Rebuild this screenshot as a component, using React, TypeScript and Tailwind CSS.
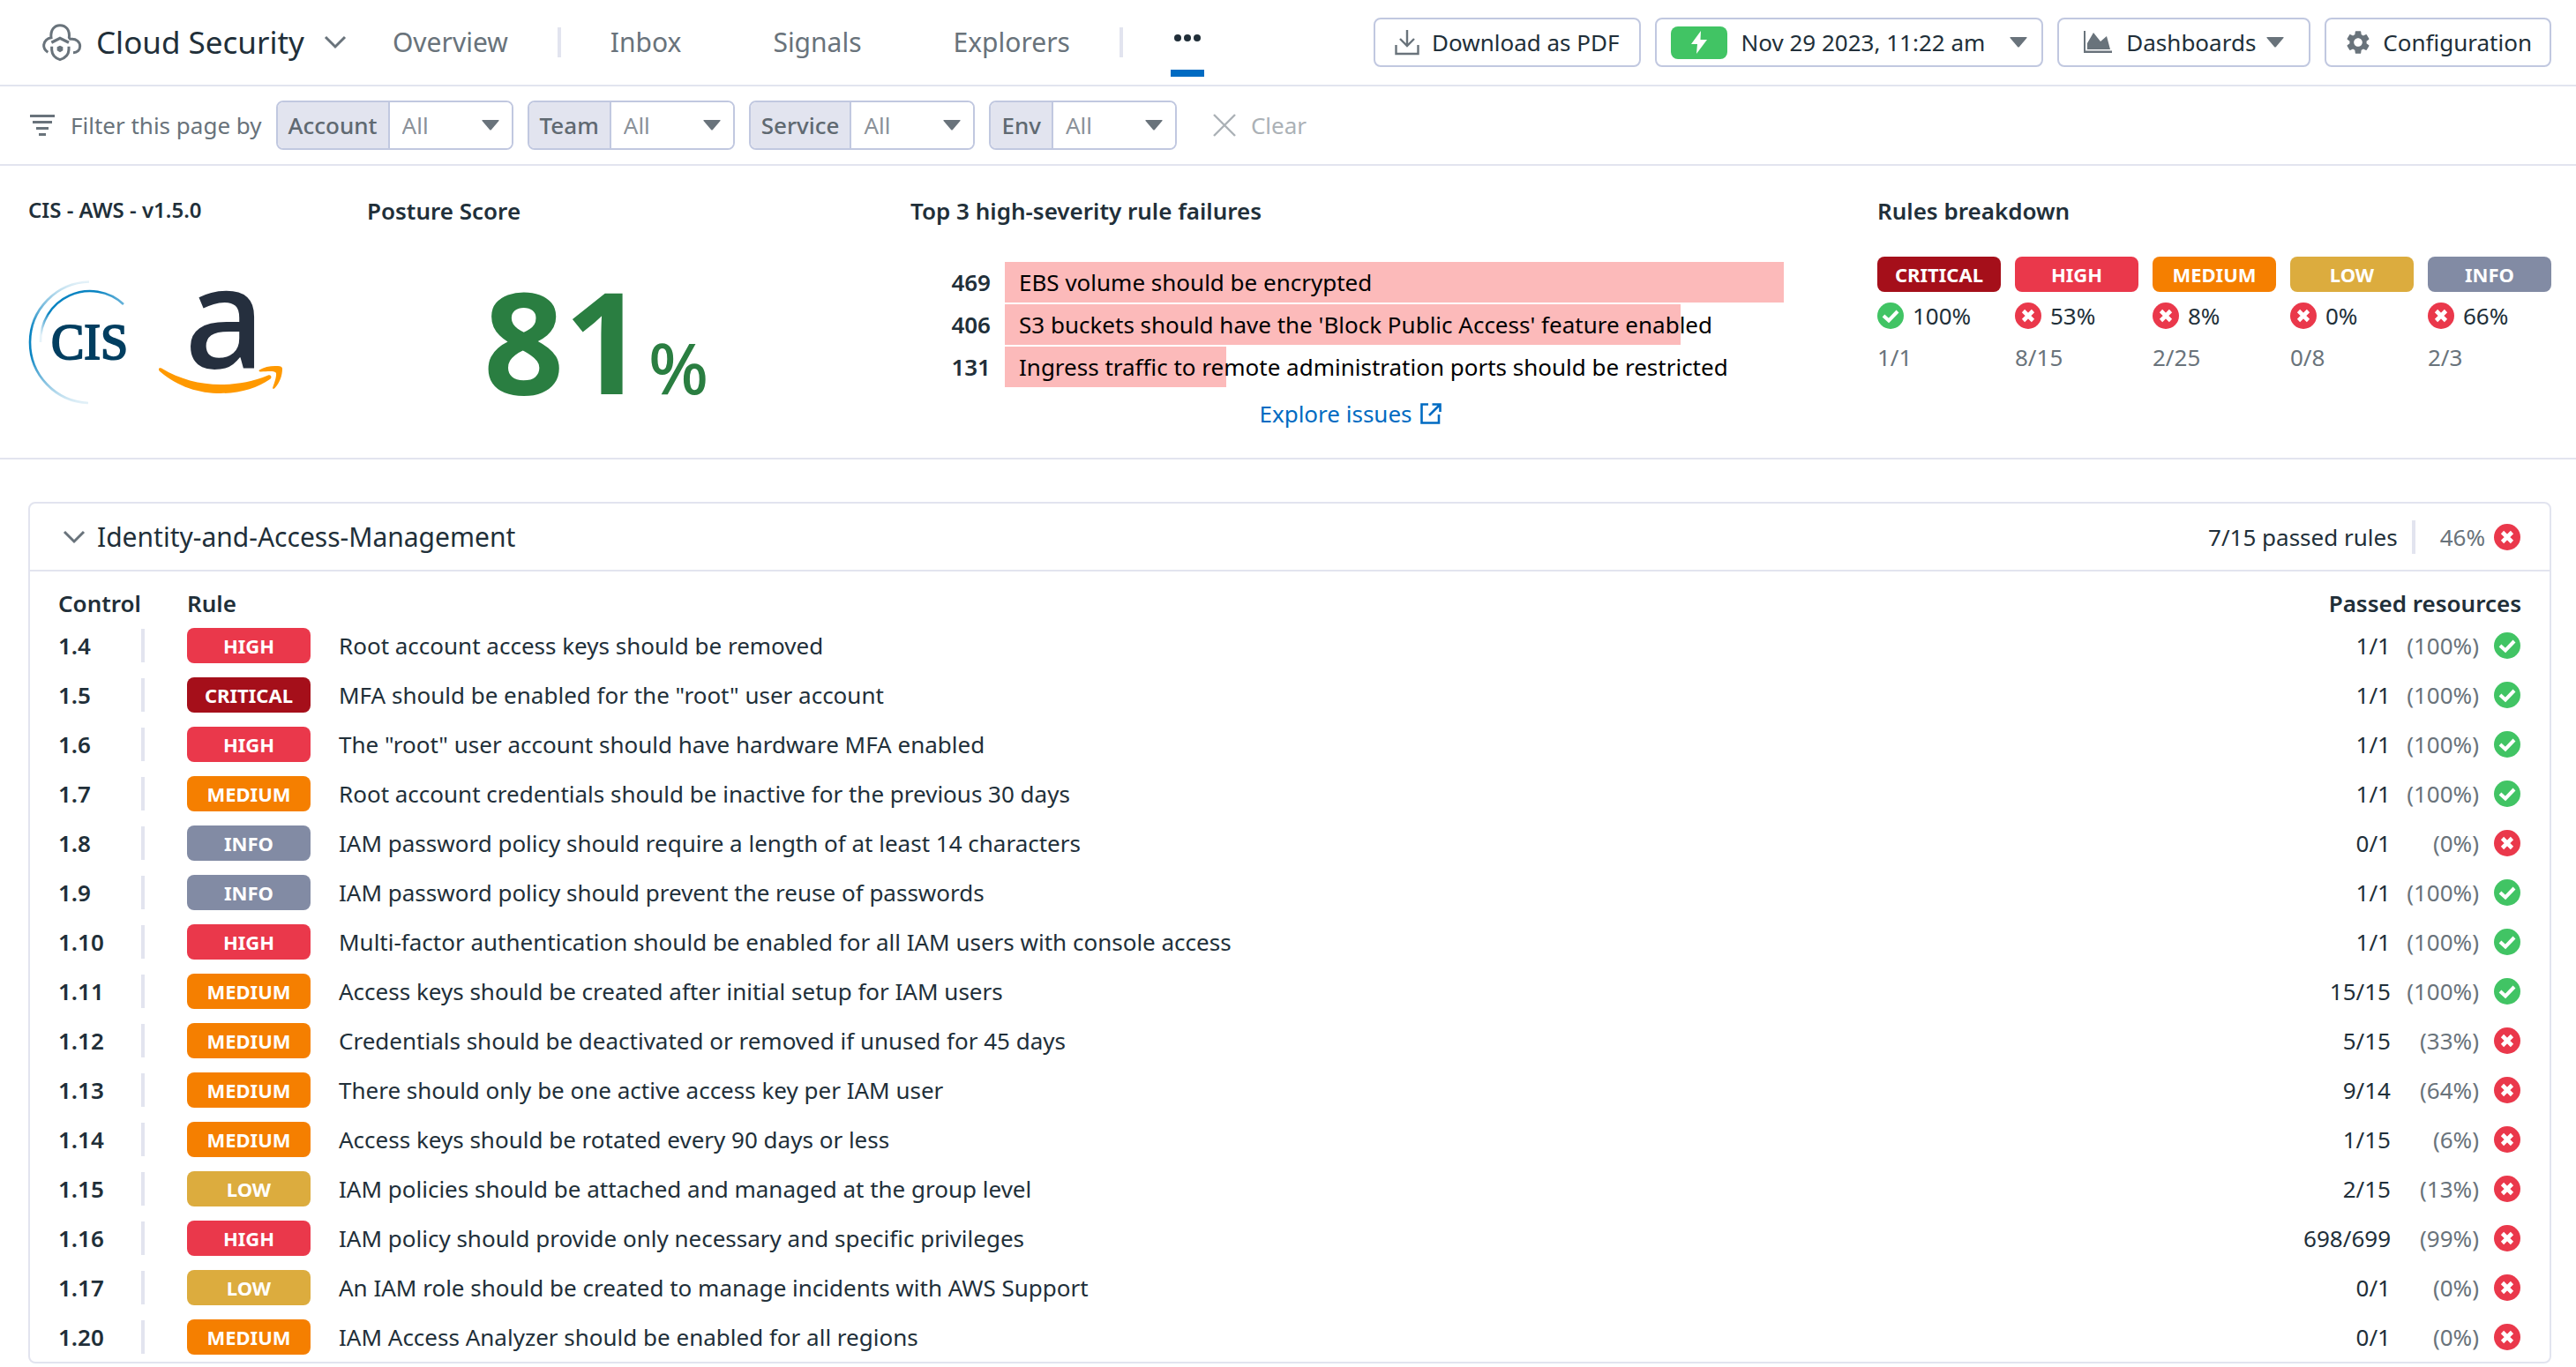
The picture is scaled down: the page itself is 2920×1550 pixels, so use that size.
import type { ReactNode } from "react";
import { MdSettings } from "react-icons/md";

type Severity = "CRITICAL" | "HIGH" | "MEDIUM" | "LOW" | "INFO";

const severityColor: Record<Severity, string> = {
  CRITICAL: "bg-[#a50f1a]",
  HIGH: "bg-[#ea384b]",
  MEDIUM: "bg-[#f57f00]",
  LOW: "bg-[#dcac3e]",
  INFO: "bg-[#828ba4]",
};

const filters = ["Account", "Team", "Service", "Env"];

const failures = [
  { count: 469, share: 100, label: "EBS volume should be encrypted" },
  { count: 406, share: 86.7, label: "S3 buckets should have the 'Block Public Access' feature enabled" },
  { count: 131, share: 28.4, label: "Ingress traffic to remote administration ports should be restricted" },
];

const breakdown: { severity: Severity; pct: string; ratio: string; ok: boolean }[] = [
  { severity: "CRITICAL", pct: "100%", ratio: "1/1", ok: true },
  { severity: "HIGH", pct: "53%", ratio: "8/15", ok: false },
  { severity: "MEDIUM", pct: "8%", ratio: "2/25", ok: false },
  { severity: "LOW", pct: "0%", ratio: "0/8", ok: false },
  { severity: "INFO", pct: "66%", ratio: "2/3", ok: false },
];

const rules: [string, Severity, string, string, string, boolean][] = [
  ["1.4", "HIGH", "Root account access keys should be removed", "1/1", "(100%)", true],
  ["1.5", "CRITICAL", 'MFA should be enabled for the "root" user account', "1/1", "(100%)", true],
  ["1.6", "HIGH", 'The "root" user account should have hardware MFA enabled', "1/1", "(100%)", true],
  ["1.7", "MEDIUM", "Root account credentials should be inactive for the previous 30 days", "1/1", "(100%)", true],
  ["1.8", "INFO", "IAM password policy should require a length of at least 14 characters", "0/1", "(0%)", false],
  ["1.9", "INFO", "IAM password policy should prevent the reuse of passwords", "1/1", "(100%)", true],
  ["1.10", "HIGH", "Multi-factor authentication should be enabled for all IAM users with console access", "1/1", "(100%)", true],
  ["1.11", "MEDIUM", "Access keys should be created after initial setup for IAM users", "15/15", "(100%)", true],
  ["1.12", "MEDIUM", "Credentials should be deactivated or removed if unused for 45 days", "5/15", "(33%)", false],
  ["1.13", "MEDIUM", "There should only be one active access key per IAM user", "9/14", "(64%)", false],
  ["1.14", "MEDIUM", "Access keys should be rotated every 90 days or less", "1/15", "(6%)", false],
  ["1.15", "LOW", "IAM policies should be attached and managed at the group level", "2/15", "(13%)", false],
  ["1.16", "HIGH", "IAM policy should provide only necessary and specific privileges", "698/699", "(99%)", false],
  ["1.17", "LOW", "An IAM role should be created to manage incidents with AWS Support", "0/1", "(0%)", false],
  ["1.20", "MEDIUM", "IAM Access Analyzer should be enabled for all regions", "0/1", "(0%)", false],
];

function CloudShield() {
  return (
    <svg width="46" height="44" viewBox="50 26 138 132" fill="none" stroke="#69737b" strokeWidth="9" aria-hidden="true">
      <path d="M72 126C60 118 57 110 58 100C60 88 70 78 83 76C80 50 94 34 113 34C133 34 147 50 144 76C148 84 146 80 152 81C168 80 181 90 181 105C181 119 172 127 158 127" />
      <path d="M84 93L113 78L143 93" strokeWidth="10" />
      <path d="M85 106V118C86 134 97 146 113 151C130 146 142 134 143 118V106" />
      <path d="M113 103L123 108V120L113 126L103 120V108Z" fill="#69737b" stroke="none" />
    </svg>
  );
}

function Chevron() {
  return (
    <svg width="26" height="16" viewBox="0 0 26 16" fill="none" stroke="#69737b" strokeWidth="3" aria-hidden="true">
      <path d="M2 2L13 13L24 2" />
    </svg>
  );
}

function Caret() {
  return (
    <svg width="20" height="12" viewBox="0 0 20 12" fill="#69737b" aria-hidden="true">
      <path d="M1 0H19Q20 0 19.500 1L11 11Q10 12 9 11L0.500 1Q0 0 1 0Z" />
    </svg>
  );
}

function Status({ ok }: { ok: boolean }) {
  return (
    <svg className="block shrink-0" width="30" height="30" viewBox="0 0 30 30" role="img" aria-label={ok ? "Passed" : "Failed"}>
      <circle cx="15" cy="15" r="15" fill={ok ? "#41c464" : "#ea384b"} />
      {ok ? (
        <path d="M7 15L13 20.500L23 10" fill="none" stroke="#fff" strokeWidth="4" />
      ) : (
        <path d="M9.500 9.500L20.500 20.500M20.500 9.500L9.500 20.500" fill="none" stroke="#fff" strokeWidth="4.600" />
      )}
    </svg>
  );
}

function Badge({ severity }: { severity: Severity }) {
  return (
    <span
      className={`flex h-10 w-[140px] items-center justify-center rounded-lg text-[22px] leading-none font-bold text-white ${severityColor[severity]}`}
    >
      {severity}
    </span>
  );
}

function ToolButton({ children, className }: { children: ReactNode; className: string }) {
  return (
    <button
      type="button"
      className={`flex h-14 items-center rounded-lg border-2 border-[#c1c8e0] bg-white whitespace-nowrap ${className}`}
    >
      {children}
    </button>
  );
}

function Divider() {
  return <span className="mx-1 h-[34px] w-1 bg-[#e2e4ef]" />;
}

function NavLink({ children }: { children: ReactNode }) {
  return (
    <a href="#" className="px-[52px] text-[30px] leading-10 text-[#69737b]">
      {children}
    </a>
  );
}

function CisLogo() {
  return (
    <svg width="112" height="144" viewBox="13 16 112 144" role="img" aria-label="CIS">
      <defs>
        <linearGradient id="outer" x1="0" y1="19" x2="0" y2="158" gradientUnits="userSpaceOnUse">
          <stop offset="0" stopColor="#0a84c2" stopOpacity="0.1" />
          <stop offset="0.4" stopColor="#0a84c2" />
          <stop offset="0.6" stopColor="#0a84c2" />
          <stop offset="1" stopColor="#0a84c2" stopOpacity="0.1" />
        </linearGradient>
        <linearGradient id="inner" x1="34" y1="92" x2="122" y2="44" gradientUnits="userSpaceOnUse">
          <stop offset="0" stopColor="#0a84c2" stopOpacity="0.1" />
          <stop offset="0.2" stopColor="#0a84c2" />
          <stop offset="0.8" stopColor="#0a84c2" />
          <stop offset="1" stopColor="#0a84c2" stopOpacity="0.6" />
        </linearGradient>
      </defs>
      <path d="M82 19.500A69 69 0 0 0 15 88A69 69 0 0 0 81 157" fill="none" stroke="url(#outer)" strokeWidth="2.600" />
      <path d="M121 45A56 56 0 0 0 27 88" fill="none" stroke="url(#inner)" strokeWidth="2.600" />
      <text x="39" y="107" fill="#023e60" fontSize="56" stroke="#023e60" strokeWidth="2" fontFamily="'Liberation Serif', serif">
        CIS
      </text>
    </svg>
  );
}

function AmazonLogo() {
  return (
    <svg className="overflow-visible" width="144" height="122" viewBox="158 27 144 122" role="img" aria-label="Amazon">
      <text x="189" y="117" fill="#252f3e" fontSize="160" fontWeight="500" fontFamily="'Noto Sans', sans-serif">
        a
      </text>
      <path
        d="M160.500 117.500C159.500 118.500 160 120 161 121C182 139 206 146 230 146C252 146 272 140 286 130C289 128 287 124 284 125.500C266 133 248 136 230 136C206 136 184 130 163 117.500C162 117 161 117 160.500 117.500Z"
        fill="#ff9900"
      />
      <path
        d="M274 119.500C280 115.500 288 114.500 295 115C298 115.300 300 116 300 118C300 126 297 134 291.500 140C290 141.500 288.500 141 289.300 139C291.500 133 293.500 127 293 123C292.500 120.500 286 120.500 275.500 121.500C273.500 121.600 273 120.500 274 119.500Z"
        fill="#ff9900"
      />
    </svg>
  );
}

export default function App() {
  return (
    <div className="min-h-screen bg-white font-['Noto_Sans',sans-serif] text-[26px] leading-9 text-[#212f39]">
      <header className="flex h-[98px] items-center border-b-2 border-[#e2e4ef] pr-7 pl-[47px]">
        <button type="button" className="flex items-center whitespace-nowrap">
          <CloudShield />
          <span className="mr-[22px] ml-4 text-[35px] leading-[48px]">Cloud Security</span>
          <Chevron />
        </button>
        <nav className="flex items-center">
          <NavLink>Overview</NavLink>
          <Divider />
          <NavLink>Inbox</NavLink>
          <NavLink>Signals</NavLink>
          <NavLink>Explorers</NavLink>
          <Divider />
          <button type="button" aria-label="More" className="ml-[50px] flex h-[78px] flex-col items-center justify-between self-end border-b-8 border-[#006bc2] px-1 pt-[30px]">
            <svg width="30" height="8" viewBox="0 0 30 8" fill="#212f39" aria-hidden="true">
              <circle cx="4" cy="4" r="4" />
              <circle cx="15" cy="4" r="4" />
              <circle cx="26" cy="4" r="4" />
            </svg>
          </button>
        </nav>
        <div className="ml-auto flex gap-4">
          <ToolButton className="gap-[14px] px-[22px]">
            <svg width="28" height="30" viewBox="0 0 28 30" fill="none" stroke="#69737b" strokeWidth="2.400" aria-hidden="true">
              <path d="M14 1V19M6 11L14 19L22 11M1.500 18V28H26.500V18" />
            </svg>
            Download as PDF
          </ToolButton>
          <ToolButton className="px-4">
            <span className="flex h-[37px] w-16 items-center justify-center rounded-lg bg-[#41c464]">
              <svg width="18" height="26" viewBox="0 0 18 26" fill="#fff" aria-hidden="true">
                <path d="M11 0L0 15H7L6 26L18 10H10.500Z" />
              </svg>
            </span>
            <span className="mr-7 ml-4">Nov 29 2023, 11:22 am</span>
            <Caret />
          </ToolButton>
          <ToolButton className="px-7">
            <svg width="32" height="26" viewBox="0 0 32 26" fill="#69737b" aria-hidden="true">
              <path d="M0 0H2V22.500H32V25H0Z" />
              <path d="M4 21V14L11 2L19 12L26 6L30 21Z" />
            </svg>
            <span className="mr-3 ml-4">Dashboards</span>
            <Caret />
          </ToolButton>
          <ToolButton className="gap-3 px-5">
            <MdSettings className="size-8 text-[#69737b]" />
            Configuration
          </ToolButton>
        </div>
      </header>

      <form className="flex h-[90px] items-center gap-4 border-b-2 border-[#e2e4ef] px-[34px] text-[#69737b]">
        <svg className="mr-[2px]" width="28" height="24" viewBox="0 0 28 24" fill="#69737b" aria-hidden="true">
          <path d="M0 0H28V3H0ZM3 7H25V10H3ZM7 14H21V17H7ZM10 21H18V24H10Z" />
        </svg>
        <span>Filter this page by</span>
        {filters.map((name) => (
          <div key={name} className="flex h-14 items-stretch overflow-hidden rounded-lg border-2 border-[#c1c8e0]">
            <label htmlFor={name} className="flex items-center border-r-2 border-[#c1c8e0] bg-[#e2e4ef] px-3 font-medium text-[#5f6971]">
              {name}
            </label>
            <div className="grid w-[138px] items-center">
              <select id={name} className="col-start-1 row-start-1 h-full w-full appearance-none bg-white px-[14px] text-[#8a9199]">
                <option>All</option>
              </select>
              <span className="pointer-events-none col-start-1 row-start-1 mr-[14px] justify-self-end">
                <Caret />
              </span>
            </div>
          </div>
        ))}
        <button type="reset" className="ml-6 flex items-center gap-4 text-[#abb1b6]">
          <svg width="28" height="26" viewBox="0 0 28 26" fill="none" stroke="#abb1b6" strokeWidth="2.400" aria-hidden="true">
            <path d="M2 1L26 25M26 1L2 25" />
          </svg>
          Clear
        </button>
      </form>

      <section className="grid h-[333px] grid-cols-[384px_616px_1fr_764px] border-b-2 border-[#e2e4ef] pt-[33px] pr-7 pl-8">
        <div>
          <h2 className="text-[24px] leading-[34px] font-semibold">CIS - AWS - v1.5.0</h2>
          <div className="mt-[61px] flex items-center gap-[34px]">
            <CisLogo />
            <AmazonLogo />
          </div>
        </div>
        <div>
          <h2 className="font-semibold">Posture Score</h2>
          <p className="mt-12 ml-[132px] flex items-baseline gap-1 leading-[160px] text-[#2a7e41]">
            <span className="text-[160px] font-bold">81</span>
            <span className="text-[80px] font-medium">%</span>
          </p>
        </div>
        <div className="pr-[98px]">
          <h2 className="font-semibold">Top 3 high-severity rule failures</h2>
          <ul className="mt-10 mr-2 flex flex-col gap-[2px]">
            {failures.map((f) => (
              <li key={f.count} className="flex h-[46px] items-center">
                <span className="w-[91px] text-right font-semibold">{f.count}</span>
                <div className="ml-4 grid h-full grow items-center">
                  <div className="col-start-1 row-start-1 h-full bg-[#fcbaba]" style={{ width: `${f.share}%` }} />
                  <span className="col-start-1 row-start-1 pl-4 whitespace-nowrap text-black">{f.label}</span>
                </div>
              </li>
            ))}
          </ul>
          <a href="#" className="mt-3 flex items-center justify-center gap-2 text-[#006bc2]">
            Explore issues
            <svg width="26" height="26" viewBox="0 0 26 26" fill="none" stroke="#006bc2" strokeWidth="2.600" aria-hidden="true">
              <path d="M10 2.500H2.500V23.500H22V14M14.500 2.500H23.500V11M23.500 2.500L11 15" />
            </svg>
          </a>
        </div>
        <div>
          <h2 className="font-semibold">Rules breakdown</h2>
          <ul className="mt-[34px] flex justify-between">
            {breakdown.map((b) => (
              <li key={b.severity}>
                <Badge severity={b.severity} />
                <div className="mt-[9px] flex items-center gap-[10px]">
                  <Status ok={b.ok} />
                  {b.pct}
                </div>
                <div className="mt-[11px] text-[#69737b]">{b.ratio}</div>
              </li>
            ))}
          </ul>
        </div>
      </section>

      <section className="mt-12 mr-7 mb-1 ml-8 rounded-lg border-2 border-[#e2e4ef]">
        <div className="flex h-[77px] items-center border-b-2 border-[#e2e4ef] pr-[33px] pl-[37px]">
          <button type="button" className="flex items-center gap-[13px] text-[30px] leading-10">
            <Chevron />
            Identity-and-Access-Management
          </button>
          <span className="ml-auto">7/15 passed rules</span>
          <span className="mr-7 ml-4 h-[38px] w-1 bg-[#e2e4ef]" />
          <span className="mr-[10px] text-[#69737b]">46%</span>
          <Status ok={false} />
        </div>
        <table className="w-full">
          <thead>
            <tr className="h-14 text-left">
              <th className="w-[178px] pt-4 pl-8 font-semibold">Control</th>
              <th colSpan={2} className="pt-4 font-semibold">Rule</th>
              <th colSpan={3} className="pt-4 pr-8 text-right font-semibold">Passed resources</th>
            </tr>
          </thead>
          <tbody>
            {rules.map(([control, severity, text, ratio, pct, ok]) => (
              <tr key={control} className="h-14">
                <td className="pl-8">
                  <div className="flex w-[98px] items-center justify-between font-semibold">
                    {control}
                    <span className="h-[38px] w-1 bg-[#e2e4ef]" />
                  </div>
                </td>
                <td className="w-[172px]">
                  <Badge severity={severity} />
                </td>
                <td>{text}</td>
                <td className="text-right">{ratio}</td>
                <td className="w-[100px] text-right text-[#69737b]">{pct}</td>
                <td className="w-20 pl-[17px]">
                  <Status ok={ok} />
                </td>
              </tr>
            ))}
          </tbody>
        </table>
      </section>
    </div>
  );
}
